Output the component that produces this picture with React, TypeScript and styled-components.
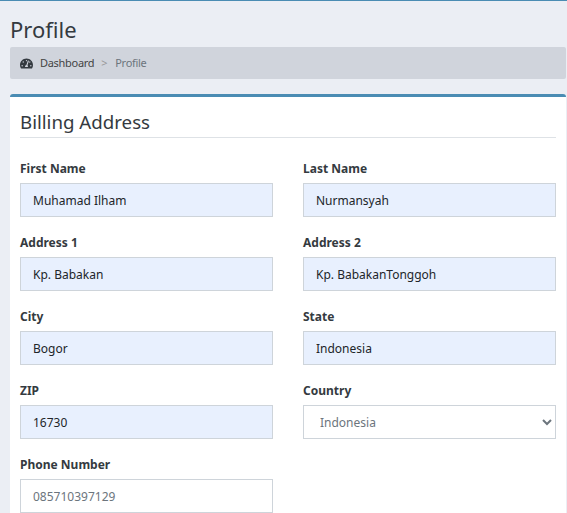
import { createGlobalStyle } from 'styled-components';
import styled from 'styled-components';
import { FaTachometerAlt } from 'react-icons/fa';

const GlobalStyle = createGlobalStyle`
  html, body {
    margin: 0;
    height: 100%;
    overflow: hidden;
    background: #ebeef4;
    font-family: 'Noto Sans', 'Open Sans', sans-serif;
  }
`;

const Page = styled.div`
  border-top: 1px solid #4a8cb3;
  padding: 0 1px 0 10px;
  height: 513px;
  box-sizing: border-box;
`;

const Title = styled.h1`
  margin: 0;
  padding-top: 13px;
  height: 33px;
  font-size: 22px;
  line-height: 30px;
  font-weight: 400;
  color: #343a40;
`;

const Breadcrumb = styled.nav`
  display: flex;
  align-items: center;
  height: 32px;
  padding: 0 10px 2px;
  box-sizing: border-box;
  border-radius: 2px;
  background: #d0d4dc;
  font-size: 11px;
  letter-spacing: -0.3px;
  color: #444;
`;

const CrumbIcon = styled(FaTachometerAlt)`
  width: 13px;
  height: 13px;
  margin: 2px 7px 0 0;
  color: #343a40;
`;

const Separator = styled.span`
  margin: 0 8px 0 7px;
  color: #999;
`;

const Current = styled.span`
  color: #6c757d;
`;

const Card = styled.section`
  margin-top: 15px;
  padding: 0 10px;
  border-top: 3px solid #4a8cb3;
  border-radius: 3px 3px 0 0;
  background: #fff;
  height: 420px;
`;

const CardTitle = styled.h2`
  margin: 0 0 22px;
  height: 40px;
  border-bottom: 1px solid #dee2e6;
  font-size: 18.7px;
  line-height: 50px;
  font-weight: 400;
  color: #343a40;
  box-sizing: content-box;
`;

const FormGrid = styled.div`
  display: grid;
  grid-template-columns: 253px 253px;
  column-gap: 30px;
  row-gap: 17px;
`;

const Field = styled.div`
  display: flex;
  flex-direction: column;
`;

const Label = styled.label`
  height: 23px;
  font-size: 12px;
  line-height: 18px;
  font-weight: 700;
  color: #343a40;
`;

const Input = styled.input<{ $filled?: boolean }>`
  box-sizing: border-box;
  width: 100%;
  height: 34px;
  padding: 0 12px;
  border: 1px solid #ced4da;
  border-radius: 0;
  outline: none;
  background: ${p => (p.$filled ? '#e8f0fe' : '#fff')};
  font-family: inherit;
  font-size: 12px;
  color: ${p => (p.$filled ? '#212529' : '#6c757d')};
`;

const Select = styled.select`
  box-sizing: border-box;
  width: 100%;
  height: 34px;
  padding: 0 12px;
  border: 1px solid #ced4da;
  border-radius: 0;
  outline: none;
  background: #fff;
  font-family: inherit;
  font-size: 12px;
  color: #6c757d;
`;

const fields = [
  { label: 'First Name', value: 'Muhamad Ilham' },
  { label: 'Last Name', value: 'Nurmansyah' },
  { label: 'Address 1', value: 'Kp. Babakan' },
  { label: 'Address 2', value: 'Kp. BabakanTonggoh' },
  { label: 'City', value: 'Bogor' },
  { label: 'State', value: 'Indonesia' },
  { label: 'ZIP', value: '16730' },
];

export default function App() {
  return (
    <Page>
      <GlobalStyle />
      <Title>Profile</Title>
      <Breadcrumb>
        <CrumbIcon />
        <span>Dashboard</span>
        <Separator>&gt;</Separator>
        <Current>Profile</Current>
      </Breadcrumb>
      <Card>
        <CardTitle>Billing Address</CardTitle>
        <FormGrid>
          {fields.map(f => (
            <Field key={f.label}>
              <Label>{f.label}</Label>
              <Input $filled defaultValue={f.value} />
            </Field>
          ))}
          <Field>
            <Label>Country</Label>
            <Select defaultValue='Indonesia'>
              <option>Indonesia</option>
            </Select>
          </Field>
          <Field>
            <Label>Phone Number</Label>
            <Input defaultValue='085710397129' />
          </Field>
        </FormGrid>
      </Card>
    </Page>
  );
}
